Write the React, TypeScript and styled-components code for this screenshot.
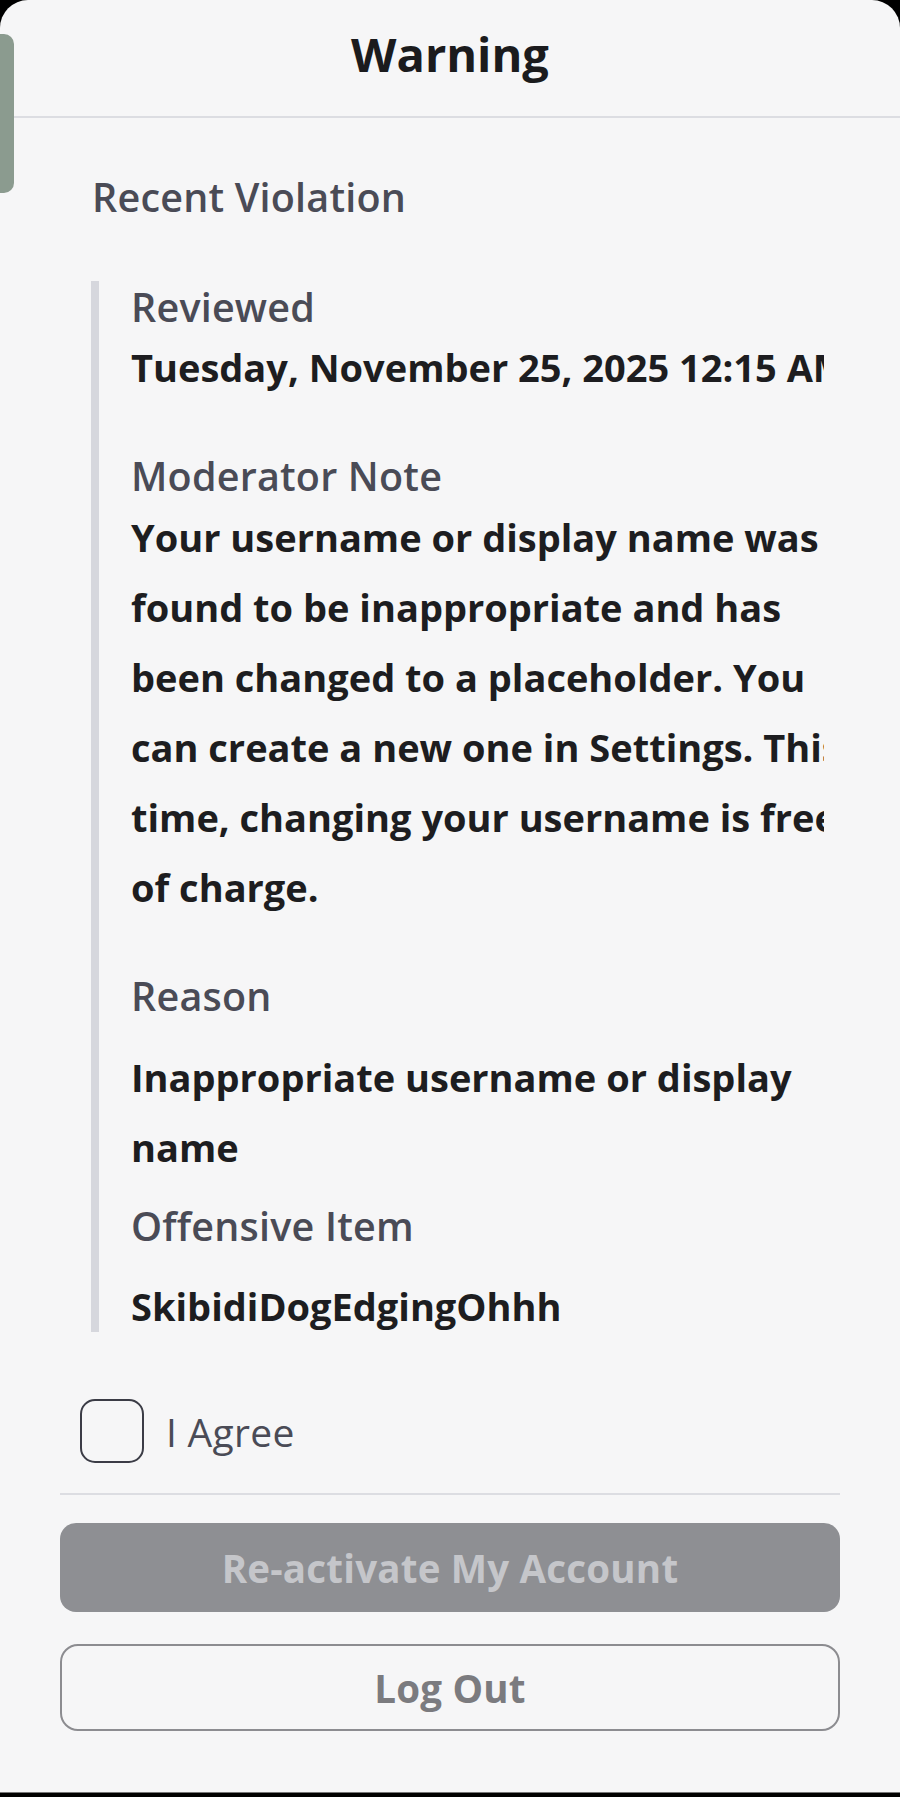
import React from "react";
import styled, { createGlobalStyle } from "styled-components";

const Global = createGlobalStyle`
  html, body {
    margin: 0;
    padding: 0;
    background: #000000;
  }
  #root {
    width: 900px;
    height: 1797px;
  }
  * { box-sizing: border-box; }
`;

const FONT = `"Open Sans", "Noto Sans", sans-serif`;

const Sheet = styled.div`
  position: relative;
  width: 900px;
  height: 1792px;
  background: #f6f6f7;
  border-radius: 28px 28px 0 0;
  font-family: ${FONT};
  display: flex;
  flex-direction: column;
  overflow: hidden;
`;

const SideTab = styled.div`
  position: absolute;
  left: -10px;
  top: 34px;
  width: 24px;
  height: 159px;
  border-radius: 10px;
  background: #8b9b8f;
`;

const Header = styled.header`
  height: 118px;
  border-bottom: 2px solid #dcdde2;
  display: flex;
  align-items: center;
  justify-content: center;
  padding-bottom: 8px;
`;

const Title = styled.h1`
  margin: 0;
  font-size: 47px;
  font-weight: 700;
  color: #1b1b1d;
  letter-spacing: 0;
`;

const Body = styled.main`
  flex: 1;
  display: flex;
  flex-direction: column;
  padding: 0 0 0 91px;
`;

const SectionTitle = styled.h2`
  margin: 57px 0 0 1px;
  font-size: 39.5px;
  line-height: 44px;
  font-weight: 600;
  color: #4a4b56;
  letter-spacing: 0.2px;
`;

const Details = styled.div`
  margin-top: 62px;
  width: 733px;
  border-left: 8px solid #d6d7dd;
  padding-left: 32px;
  overflow: hidden;
  display: flex;
  flex-direction: column;
`;

const Label = styled.div<{ $gap: number }>`
  margin-top: ${(p) => p.$gap}px;
  font-size: 39.5px;
  line-height: 52px;
  font-weight: 600;
  color: #4a4b56;
  letter-spacing: 0.2px;
  white-space: nowrap;
`;

const Value = styled.div<{ $gap?: number; $lh?: number }>`
  margin-top: ${(p) => p.$gap ?? 0}px;
  font-size: 38px;
  line-height: ${(p) => p.$lh ?? 70}px;
  font-weight: 700;
  color: #1d1d20;
  letter-spacing: 0;
  white-space: nowrap;
`;

const Line = styled.span`
  display: block;
`;

const Footer = styled.footer`
  margin-top: auto;
  padding: 0 60px 61px;
  display: flex;
  flex-direction: column;
`;

const AgreeRow = styled.label`
  display: flex;
  align-items: center;
  gap: 22px;
  padding-left: 20px;
`;

const Box = styled.span`
  width: 64px;
  height: 64px;
  border: 2.5px solid #3b3c46;
  border-radius: 15px;
  background: transparent;
`;

const AgreeText = styled.span`
  font-size: 39px;
  font-weight: 400;
  color: #4a4b56;
  letter-spacing: 0.3px;
`;

const Divider = styled.hr`
  margin: 30px 0 0;
  border: none;
  height: 2px;
  background: #dcdde2;
`;

const Button = styled.button<{ $variant: "filled" | "outline" }>`
  margin-top: ${(p) => (p.$variant === "filled" ? 28 : 32)}px;
  height: ${(p) => (p.$variant === "filled" ? 89 : 87)}px;
  width: 100%;
  border-radius: ${(p) => (p.$variant === "filled" ? 16 : 18)}px;
  border: ${(p) => (p.$variant === "filled" ? "none" : "2px solid #8c8c90")};
  background: ${(p) => (p.$variant === "filled" ? "#8e8f93" : "transparent")};
  color: ${(p) => (p.$variant === "filled" ? "#c5c6ca" : "#7b7b7f")};
  font-family: ${FONT};
  font-size: 38.5px;
  font-weight: 700;
  letter-spacing: 0.2px;
  display: flex;
  align-items: center;
  justify-content: center;
  padding: 0;
`;

const BottomBar = styled.div`
  height: 5px;
  background: #000;
  border-top: 1px solid #777;
`;

const noteLines = [
  "Your username or display name was",
  "found to be inappropriate and has",
  "been changed to a placeholder. You",
  "can create a new one in Settings. This",
  "time, changing your username is free",
  "of charge.",
];

export default function App() {
  return (
    <>
      <Global />
      <Sheet>
        <SideTab />
        <Header>
          <Title>Warning</Title>
        </Header>
        <Body>
          <SectionTitle>Recent Violation</SectionTitle>
          <Details>
            <Label $gap={0}>Reviewed</Label>
            <Value $lh={68}>Tuesday, November 25, 2025 12:15 AM</Value>
            <Label $gap={49}>Moderator Note</Label>
            <Value>
              {noteLines.map((l) => (
                <Line key={l}>{l}</Line>
              ))}
            </Value>
            <Label $gap={48}>Reason</Label>
            <Value $gap={20}>
              <Line>Inappropriate username or display</Line>
              <Line>name</Line>
            </Value>
            <Label $gap={18}>Offensive Item</Label>
            <Value $gap={28} $lh={52}>
              SkibidiDogEdgingOhhh
            </Value>
          </Details>
        </Body>
        <Footer>
          <AgreeRow>
            <Box />
            <AgreeText>I Agree</AgreeText>
          </AgreeRow>
          <Divider />
          <Button $variant="filled" disabled>
            Re-activate My Account
          </Button>
          <Button $variant="outline">Log Out</Button>
        </Footer>
      </Sheet>
      <BottomBar />
    </>
  );
}
